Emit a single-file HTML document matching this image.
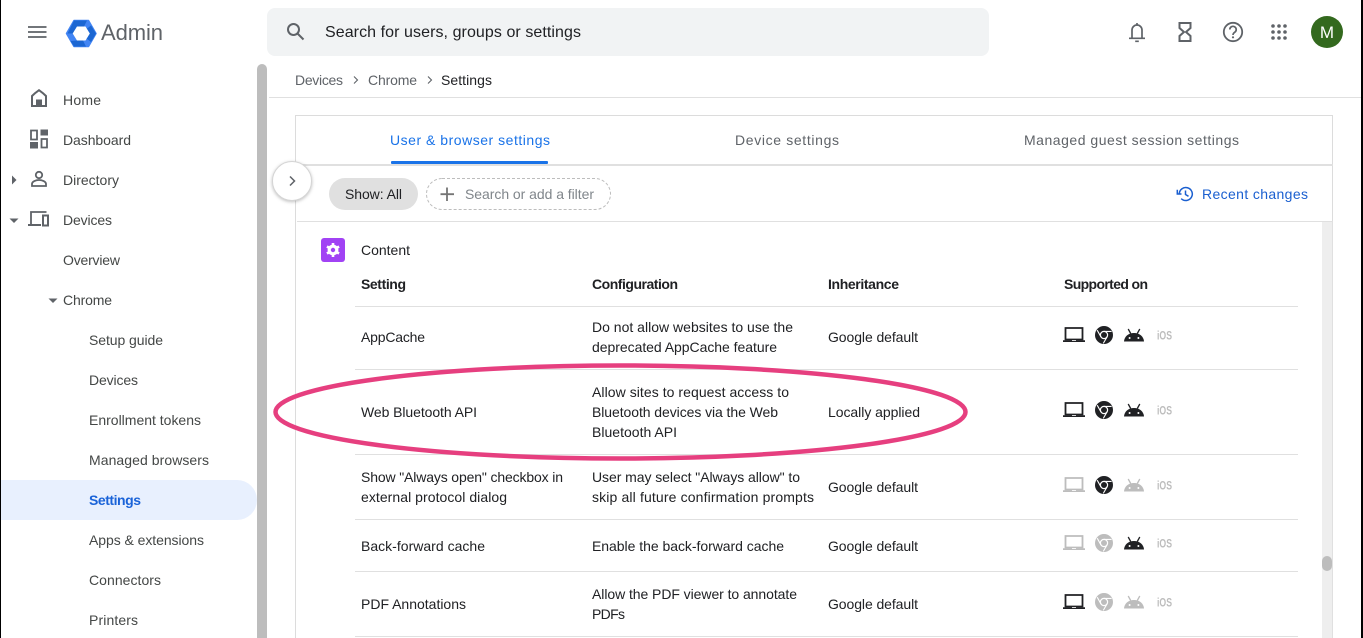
<!DOCTYPE html>
<html lang="en"><head><meta charset="utf-8"><title>Admin</title>
<style>
html,body{margin:0;padding:0;background:#fff;width:1363px;height:638px;overflow:hidden}
svg{display:block;font-family:"Liberation Sans",sans-serif;font-size:14px}
.s{fill:#444746}.t{fill:#202124}.b{font-weight:700}.g{fill:#5f6368}
.i{fill:#bdbdbd;font-size:12px;font-weight:700}
</style></head><body>
<svg width="1363" height="638" viewBox="0 0 1363 638" xmlns="http://www.w3.org/2000/svg">
<defs>
<symbol id="lap" viewBox="0 0 22 16" overflow="visible"><path d="M2.5 1h17v11.5h-17z" fill="none" stroke="currentColor" stroke-width="1.8"/><path d="M0 13.2h22v1.8H0z" fill="currentColor"/><path d="M9 13.2h4v.8H9z" fill="#fff"/></symbol>
<symbol id="chr" viewBox="0 0 18 18"><circle cx="9" cy="9" r="9" fill="currentColor"/><circle cx="9" cy="9" r="3.6" fill="none" stroke="#fff" stroke-width="1.2"/><path d="M9 5.4h7.6M5.9 10.8 2.2 4.2M12.1 10.8 8.3 17.4" fill="none" stroke="#fff" stroke-width="1.1"/></symbol>
<symbol id="and" viewBox="0 0 20 14"><path d="M0 13.5C.3 8.8 4 5 10 5s9.700 3.800 10 8.500z" fill="currentColor"/><path d="M4.200 1 6.700 5.500M15.800 1 13.300 5.500" stroke="currentColor" stroke-width="1.300"/><circle cx="5.600" cy="10" r="1" fill="#fff"/><circle cx="14.400" cy="10" r="1" fill="#fff"/></symbol>
</defs>
<rect width="1363" height="638" fill="#fff"/>
<rect x="0" y="0" width="1" height="638" fill="#000"/>
<rect x="1361" y="0" width="2" height="638" fill="#000"/>

<!-- top bar -->
<path d="M28 27h18.500M28 32h18.500M28 37h18.500" stroke="#5f6368" stroke-width="1.700"/>
<path d="M74 20.500h14.500L96 33.500 88.500 46.500H74L66.500 33.500z" fill="#4285f4" stroke="#4285f4" stroke-width="1.500" stroke-linejoin="round"/>
<path d="M74 20.500H87L84 26.500H77L73 33.500H67.500zM91 25.500 96 33.500 91 42 86.500 38.500 89.800 33.500 86.500 29zM77 40.500H83L86 46.500H74L70.500 41z" fill="#1b66d2"/>
<path d="M77 26.500h8.500l4.300 7-4.300 7H77l-4.300-7z" fill="#fff"/>
<text x="101" y="40" font-size="22" fill="#5f6368" textLength="62">Admin</text>
<rect x="267" y="8" width="722" height="48" rx="8" fill="#f1f3f4"/>
<circle cx="293.500" cy="29.500" r="5.500" fill="none" stroke="#5f6368" stroke-width="2"/><path d="M297.500 33.500l6 6" stroke="#5f6368" stroke-width="2"/>
<text x="325" y="37" font-size="16" class="t" textLength="256">Search for users, groups or settings</text>
<path d="M1132 37.500V30a5 5 0 0 1 10 0v7.500M1129 38.300h16M1135.200 41.300h3.600M1137 25v-2" fill="none" stroke="#5f6368" stroke-width="1.700"/>
<path d="M1179.500 23h11v5l-4.500 4 4.500 4v5h-11v-5l4.500-4-4.500-4z" fill="none" stroke="#5f6368" stroke-width="2"/>
<circle cx="1233" cy="32" r="9.200" fill="none" stroke="#5f6368" stroke-width="1.800"/>
<path d="M1229.800 29.500a3.200 3.200 0 1 1 5 2.700c-1.200.8-1.800 1.300-1.800 2.800" fill="none" stroke="#5f6368" stroke-width="1.700"/><circle cx="1233" cy="37.300" r="1.100" fill="#5f6368"/>
<g fill="#5f6368"><circle cx="1273" cy="26" r="1.800"/><circle cx="1279" cy="26" r="1.800"/><circle cx="1285" cy="26" r="1.800"/><circle cx="1273" cy="32" r="1.800"/><circle cx="1279" cy="32" r="1.800"/><circle cx="1285" cy="32" r="1.800"/><circle cx="1273" cy="38" r="1.800"/><circle cx="1279" cy="38" r="1.800"/><circle cx="1285" cy="38" r="1.800"/></g>
<circle cx="1327" cy="32" r="16" fill="#33691e"/>
<text x="1327" y="38" font-size="17" fill="#fff" text-anchor="middle">M</text>

<!-- sidebar -->
<path d="M1 480H237a20 20 0 0 1 0 40H1z" fill="#e8f0fe"/>
<path d="M257 638V69a5 5 0 0 1 10 0v569z" fill="#bdbdbd"/>
<path d="M32 106V96Q35 93 39 90.200 43 93 46 96V106z" fill="none" stroke="#5f6368" stroke-width="2"/><path d="M36 106v-6.500h6V106z" fill="#5f6368"/>
<path d="M31 130.500h6v9h-6z" fill="none" stroke="#5f6368" stroke-width="1.800"/><path d="M30 142h8v6.500h-8zM40.500 129.500H48v6h-7.500z" fill="#5f6368"/><path d="M41.500 139h5.500v8.500h-5.500z" fill="none" stroke="#5f6368" stroke-width="1.800"/>
<circle cx="39" cy="175" r="3.200" fill="none" stroke="#5f6368" stroke-width="1.800"/><path d="M32 186v-2c0-2.600 4-4 7-4s7 1.400 7 4v2z" fill="none" stroke="#5f6368" stroke-width="1.800"/>
<path d="M12 175.500l4.500 4.500-4.500 4.500z" fill="#5f6368"/>
<path d="M9.500 218.500h9l-4.500 4.500z" fill="#5f6368"/>
<path d="M48.500 298.500h9l-4.500 4.500z" fill="#5f6368"/>
<path d="M31 224.500V212h15.500" fill="none" stroke="#5f6368" stroke-width="1.800"/><path d="M28 224h13v2H28z" fill="#5f6368"/><path d="M43 215.500h5v10h-5z" fill="none" stroke="#5f6368" stroke-width="2"/>
<g class="s">
<text x="63" y="105" textLength="38">Home</text>
<text x="63" y="145" textLength="68">Dashboard</text>
<text x="63" y="185" textLength="56">Directory</text>
<text x="63" y="225" textLength="49">Devices</text>
<text x="63" y="265" textLength="57">Overview</text>
<text x="63" y="305" textLength="49">Chrome</text>
<text x="89" y="345" textLength="74">Setup guide</text>
<text x="89" y="385" textLength="49">Devices</text>
<text x="89" y="425" textLength="112">Enrollment tokens</text>
<text x="89" y="465" textLength="120">Managed browsers</text>
<text x="89" y="545" textLength="115">Apps &amp; extensions</text>
<text x="89" y="585" textLength="72">Connectors</text>
<text x="89" y="625" textLength="49">Printers</text>
</g>
<text x="89" y="505" fill="#1a63d8" font-weight="700" textLength="52">Settings</text>

<!-- breadcrumb -->
<rect x="269" y="97" width="1092" height="1" fill="#e0e0e0"/>
<text x="295" y="85" class="g" textLength="48">Devices</text>
<path d="M354 76.500l3.500 3.500-3.500 3.500" fill="none" stroke="#5f6368" stroke-width="1.100"/>
<text x="368" y="85" class="g" textLength="49">Chrome</text>
<path d="M428 76.500l3.500 3.500-3.500 3.500" fill="none" stroke="#5f6368" stroke-width="1.100"/>
<text x="441" y="85" class="t" textLength="51">Settings</text>

<!-- panel -->
<path d="M295.500 638V115.500H1332.500V222" fill="none" stroke="#dcdcdc"/>
<rect x="296" y="164" width="1037" height="2" fill="#e0e0e0"/>
<rect x="297" y="221" width="1036" height="1" fill="#e0e0e0"/>
<rect x="391" y="161" width="157" height="3" rx="1" fill="#1a73e8"/>
<text x="390" y="145" fill="#1a73e8" textLength="160">User &amp; browser settings</text>
<text x="735" y="145" class="g" textLength="104">Device settings</text>
<text x="1024" y="145" class="g" textLength="215">Managed guest session settings</text>
<circle cx="292" cy="181" r="19.500" fill="#fff" stroke="#d5d5d5" style="filter:drop-shadow(0 1px 1.500px rgba(0,0,0,.25))"/>
<path d="M290 176.500l4.500 4.500-4.500 4.500" fill="none" stroke="#5f6368" stroke-width="1.500"/>
<rect x="329" y="178" width="89" height="32" rx="16" fill="#e0e0e0"/>
<text x="345" y="199" class="t" textLength="57">Show: All</text>
<rect x="426.500" y="178.500" width="184" height="31" rx="15.500" fill="#fff" stroke="#bdbdbd" stroke-dasharray="3 2"/>
<path d="M447 187.500v13.500M440.500 194.200h13.500" stroke="#757575" stroke-width="1.800"/>
<text x="465" y="199" fill="#80868b" textLength="129">Search or add a filter</text>
<path d="M1179.300 194a6.500 6.500 0 1 1 1.900 4.600M1177.300 189.800v4.200h4.200M1185.500 190.500v4l3 1.800" fill="none" stroke="#1a5fd0" stroke-width="1.500"/>
<text x="1202" y="199" fill="#1a5fd0" textLength="106">Recent changes</text>
<rect x="1322" y="222" width="11" height="416" fill="#eee"/>
<rect x="1332" y="222" width="1" height="416" fill="#e0e0e0"/>
<rect x="1322" y="556" width="10" height="15" rx="5" fill="#bdbdbd"/>

<!-- table -->
<rect x="321" y="238" width="24" height="24" rx="3" fill="#a142f4"/>
<circle cx="333" cy="250" r="5.400" fill="#fff"/>
<path d="M333 243v14M326.940 246.500l12.120 7M326.940 253.500l12.120-7" stroke="#fff" stroke-width="2.600"/>
<circle cx="333" cy="250" r="2.200" fill="#a142f4"/>
<text x="361" y="255" class="t" textLength="49">Content</text>
<g class="t b">
<text x="361" y="289" textLength="45">Setting</text>
<text x="592" y="289" textLength="86">Configuration</text>
<text x="828" y="289" textLength="71">Inheritance</text>
<text x="1064" y="289" textLength="84">Supported on</text>
</g>
<g fill="#e0e0e0">
<rect x="355" y="306" width="943" height="1"/>
<rect x="355" y="369" width="943" height="1"/>
<rect x="355" y="454" width="943" height="1"/>
<rect x="355" y="519" width="943" height="1"/>
<rect x="355" y="571" width="943" height="1"/>
<rect x="355" y="636" width="943" height="1"/>
</g>
<g class="t">
<text x="361" y="342" textLength="64">AppCache</text>
<text x="592" y="332" textLength="201">Do not allow websites to use the</text>
<text x="592" y="352" textLength="185">deprecated AppCache feature</text>
<text x="828" y="342" textLength="90">Google default</text>
<text x="361" y="417" textLength="116">Web Bluetooth API</text>
<text x="592" y="397" textLength="197">Allow sites to request access to</text>
<text x="592" y="417" textLength="186">Bluetooth devices via the Web</text>
<text x="592" y="437" textLength="85">Bluetooth API</text>
<text x="828" y="417" textLength="92">Locally applied</text>
<text x="361" y="482" textLength="202">Show "Always open" checkbox in</text>
<text x="361" y="502" textLength="146">external protocol dialog</text>
<text x="592" y="482" textLength="208">User may select "Always allow" to</text>
<text x="592" y="502" textLength="222">skip all future confirmation prompts</text>
<text x="828" y="492" textLength="90">Google default</text>
<text x="361" y="551" textLength="124">Back-forward cache</text>
<text x="592" y="551" textLength="192">Enable the back-forward cache</text>
<text x="828" y="551" textLength="90">Google default</text>
<text x="361" y="609" textLength="105">PDF Annotations</text>
<text x="592" y="599" textLength="205">Allow the PDF viewer to annotate</text>
<text x="592" y="619" textLength="33">PDFs</text>
<text x="828" y="609" textLength="90">Google default</text>
</g>
<!-- platform icons -->
<g color="#202124"><use href="#lap" x="1063" y="327" width="22" height="16"/><use href="#chr" x="1095" y="326" width="18" height="18"/><use href="#and" x="1124" y="328" width="20" height="14"/></g>
<text x="1157" y="339.500" class="i" textLength="15" lengthAdjust="spacingAndGlyphs">iOS</text>
<g color="#202124"><use href="#lap" x="1063" y="402" width="22" height="16"/><use href="#chr" x="1095" y="401" width="18" height="18"/><use href="#and" x="1124" y="403" width="20" height="14"/></g>
<text x="1157" y="414.500" class="i" textLength="15" lengthAdjust="spacingAndGlyphs">iOS</text>
<use href="#lap" x="1063" y="477" width="22" height="16" color="#bdbdbd"/><use href="#chr" x="1095" y="476" width="18" height="18" color="#202124"/><use href="#and" x="1124" y="478" width="20" height="14" color="#bdbdbd"/>
<text x="1157" y="489.500" class="i" textLength="15" lengthAdjust="spacingAndGlyphs">iOS</text>
<use href="#lap" x="1063" y="535" width="22" height="16" color="#bdbdbd"/><use href="#chr" x="1095" y="534" width="18" height="18" color="#bdbdbd"/><use href="#and" x="1124" y="536" width="20" height="14" color="#202124"/>
<text x="1157" y="547.500" class="i" textLength="15" lengthAdjust="spacingAndGlyphs">iOS</text>
<use href="#lap" x="1063" y="594" width="22" height="16" color="#202124"/><use href="#chr" x="1095" y="593" width="18" height="18" color="#bdbdbd"/><use href="#and" x="1124" y="595" width="20" height="14" color="#bdbdbd"/>
<text x="1157" y="606.500" class="i" textLength="15" lengthAdjust="spacingAndGlyphs">iOS</text>

<!-- annotation ellipse -->
<ellipse cx="620.500" cy="412" rx="345" ry="46.500" fill="none" stroke="#e63f7f" stroke-width="4.500"/>
</svg>
</body></html>
